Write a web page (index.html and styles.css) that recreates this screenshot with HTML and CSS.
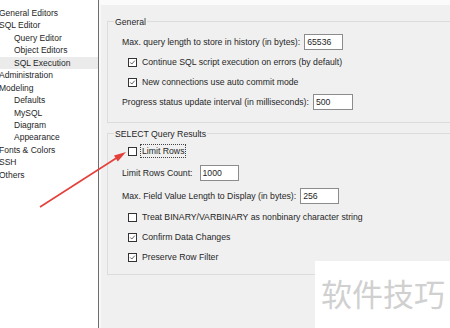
FILE: index.html
```html
<!DOCTYPE html>
<html lang="en">
<head>
  <meta charset="UTF-8" />
  <meta name="viewport" content="width=device-width, initial-scale=1.0" />
  <title>Preferences - SQL Execution</title>
  <link rel="stylesheet" href="styles.css">
</head>
<body>
  <div class="window">
    <ul class="tree">
      <li>General Editors</li>
      <li>SQL Editor</li>
      <li class="child">Query Editor</li>
      <li class="child">Object Editors</li>
      <li class="child selected">SQL Execution</li>
      <li>Administration</li>
      <li>Modeling</li>
      <li class="child">Defaults</li>
      <li class="child">MySQL</li>
      <li class="child">Diagram</li>
      <li class="child">Appearance</li>
      <li>Fonts &amp; Colors</li>
      <li>SSH</li>
      <li>Others</li>
    </ul>

    <div class="panel">
      <div class="group">
        <span class="group-title">General</span>
        <div class="rows rows-general">
          <div class="row">
            <span>Max. query length to store in history (in bytes):</span>
            <span class="input">65536</span>
          </div>
          <div class="row check">
            <span class="box"><svg viewBox="0 0 9 9"><path d="M1.6 4.4l2 2.1 3.9-4.4" /></svg></span>
            <span>Continue SQL script execution on errors (by default)</span>
          </div>
          <div class="row check">
            <span class="box"><svg viewBox="0 0 9 9"><path d="M1.6 4.4l2 2.1 3.9-4.4" /></svg></span>
            <span>New connections use auto commit mode</span>
          </div>
          <div class="row">
            <span>Progress status update interval (in milliseconds):</span>
            <span class="input wide">500</span>
          </div>
        </div>
      </div>

      <div class="group">
        <span class="group-title">SELECT Query Results</span>
        <div class="rows rows-results">
          <div class="row check">
            <span class="box"></span>
            <span class="focused">Limit Rows</span>
          </div>
          <div class="row tall">
            <span>Limit Rows Count:</span>
            <span class="input far">1000</span>
          </div>
          <div class="row tall">
            <span>Max. Field Value Length to Display (in bytes):</span>
            <span class="input">256</span>
          </div>
          <div class="row check">
            <span class="box"></span>
            <span>Treat BINARY/VARBINARY as nonbinary character string</span>
          </div>
          <div class="row check">
            <span class="box"><svg viewBox="0 0 9 9"><path d="M1.6 4.4l2 2.1 3.9-4.4" /></svg></span>
            <span>Confirm Data Changes</span>
          </div>
          <div class="row check">
            <span class="box"><svg viewBox="0 0 9 9"><path d="M1.6 4.4l2 2.1 3.9-4.4" /></svg></span>
            <span>Preserve Row Filter</span>
          </div>
        </div>
      </div>
    </div>

    <div class="watermark">软件技巧</div>

    <svg class="arrow" viewBox="0 0 450 328">
      <line x1="40" y1="207" x2="118" y2="157" />
      <polygon points="126,152 117.8,161.4 114,155.5" />
    </svg>
  </div>
</body>
</html>
```

FILE: styles.css
```css
:root {
  --panel-bg: #f0f0f0;
  --group-line: #dcdcdc;
  --text: #262626;
  --tree-line: #6e6e6e;
  --input-line: #8c8c8c;
  --arrow: #e4403b;
}

body {
  margin: 0;
  font-family: "Liberation Sans", Arial, sans-serif;
  font-size: 8.7px;
  color: var(--text);
}

.window {
  position: relative;
  display: flex;
  width: 450px;
  height: 328px;
  overflow: hidden;
}

/* left tree */
.tree {
  list-style: none;
  margin: 0;
  padding: 7px 0 0 0;
  width: 98px;
  flex-shrink: 0;
  background: #fff;
  border-right: 1px solid var(--tree-line);
  font-size: 8.5px;
}

.tree li {
  height: 12.45px;
  line-height: 12.45px;
  white-space: nowrap;
  margin-left: -1px;
}

.tree li.child {
  padding-left: 15px;
}

.tree li.selected {
  background: #ebebeb;
}

/* right panel */
.panel {
  flex: 1;
  min-width: 0;
  background: var(--panel-bg);
  border-left: 2px solid #f8f8f8;
  border-top: 5px solid #fbfbfb;
  padding: 16px 0 0 6px;
}

.group {
  border: 1px solid var(--group-line);
  margin-right: -20px;
  padding: 0 0 10px 14px;
}

.group + .group {
  margin-top: 10px;
  padding-bottom: 7px;
}

.group-title {
  display: block;
  width: fit-content;
  line-height: 10px;
  margin: -5px 0 0 -8px;
  padding: 0 1px;
  background: var(--panel-bg);
}

.rows-general {
  padding-top: 5px;
}

.rows-results {
  padding-top: 2px;
}

.row {
  display: flex;
  align-items: center;
  height: 20px;
  white-space: nowrap;
}

.row.tall {
  height: 23px;
}

.row.check {
  padding-left: 6px;
}

.box {
  width: 7px;
  height: 7px;
  border: 1px solid #333;
  background: #fff;
  margin-right: 5px;
  display: flex;
}

.box svg {
  width: 7px;
  height: 7px;
  fill: none;
  stroke: #333;
  stroke-width: 1;
}

.focused {
  outline: 1px dotted #444;
  outline-offset: 1px;
  line-height: 10px;
}

.input {
  box-sizing: border-box;
  width: 39px;
  height: 16px;
  line-height: 14px;
  margin-left: 4px;
  padding-left: 2px;
  background: #fff;
  border: 1px solid var(--input-line);
}

.input.wide {
  width: 40px;
}

.input.far {
  margin-left: 7px;
}

/* overlays */
.watermark {
  position: absolute;
  right: 0;
  bottom: 0;
  width: 135px;
  height: 67px;
  background: #fff;
  color: #d0d0d0;
  font-family: "Noto Sans CJK SC", sans-serif;
  font-size: 31px;
  line-height: 30px;
  padding: 17px 0 0 6px;
  box-sizing: border-box;
  white-space: nowrap;
}

.arrow {
  position: absolute;
  left: 0;
  top: 0;
  width: 450px;
  height: 328px;
  pointer-events: none;
}

.arrow line {
  stroke: var(--arrow);
  stroke-width: 1.6;
}

.arrow polygon {
  fill: var(--arrow);
}
```
